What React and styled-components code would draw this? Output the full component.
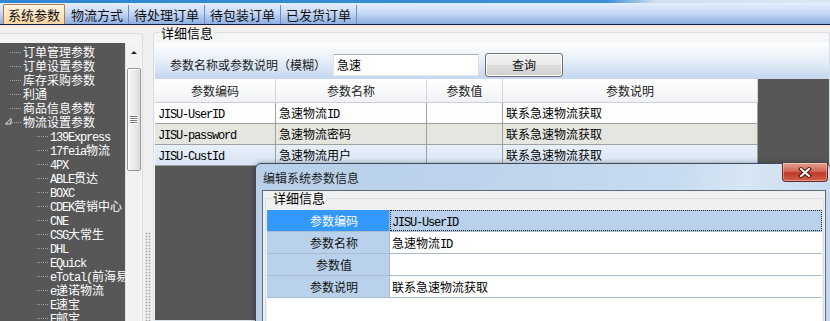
import React from 'react';
import styled, { createGlobalStyle, css } from 'styled-components';

const GlobalStyle = createGlobalStyle`
  html, body { margin: 0; padding: 0; }
  body {
    background: #f0f0f0;
    font-family: "Noto Sans CJK SC", "Liberation Sans", sans-serif;
    font-size: 12px;
    color: #000;
    overflow: hidden;
  }
`;

const Screen = styled.div`
  position: relative;
  width: 830px;
  height: 321px;
  overflow: hidden;
  display: flex;
  flex-direction: column;
  background: #f0f0f0;
`;

const TopStrip = styled.div`
  height: 3px;
  flex: none;
  background: linear-gradient(90deg, #2f86d2 0%, #3a8ed6 73%, #cfe0f1 79%, #dbe8f4 100%);
`;

const TabBar = styled.div`
  height: 21px;
  flex: none;
  display: flex;
  align-items: flex-end;
  padding-left: 3px;
  background: linear-gradient(180deg, #e4eefc 0%, #c9dbf6 45%, #8eaee2 100%);
  border-bottom: 1px solid #161c4a;
`;

const Tab = styled.div`
  height: 19px;
  padding: 0 5px;
  font-size: 13px;
  line-height: 19px;
  color: #111;
  white-space: nowrap;
  border-right: 1px solid #6f8fc0;
  ${({ $active }) => $active && css`
    padding: 0 4px;
    background: linear-gradient(180deg, #fff4e2 0%, #fde3c0 55%, #fbd6a2 100%);
    border: 1px solid #b47c4c;
    border-bottom: none;
    border-radius: 2px 2px 0 0;
    margin-right: 1px;
  `}
`;

const Body = styled.div`
  flex: 1;
  display: flex;
  min-height: 0;
  background: linear-gradient(180deg, #f7ece4 0, #f7ece4 3px, #fbfbfb 3px, #fbfbfb 4px, #f0f0f0 4px);
`;

/* ---------- left tree ---------- */

const LeftPanel = styled.div`
  width: 143px;
  flex: none;
  padding-top: 8px;
  display: flex;
  flex-direction: column;
`;

const LeftBox = styled.div`
  flex: 1;
  display: flex;
  box-sizing: border-box;
  padding: 9px 1px 0 0;
  border-top: 1px solid #d5dfe5;
  border-right: 1px solid #d5dfe5;
  border-top-right-radius: 4px;
  background: #f4f4f4;
  min-height: 0;
`;

const Tree = styled.div`
  width: 125px;
  flex: none;
  background: #575757;
  overflow: hidden;
  padding-top: 2px;
`;

const TreeRow = styled.div`
  position: relative;
  height: 14px;
  line-height: 14px;
  padding-left: ${({ $level }) => ($level === 1 ? 23 : 50)}px;
  color: #fff;
  font-size: 12px;
  white-space: nowrap;
  &::before {
    content: '';
    position: absolute;
    left: ${({ $level }) => ($level === 1 ? 10 : 37)}px;
    width: 11px;
    top: 7px;
    border-top: 1px dotted #a4a4a4;
  }
`;

const Expander = styled.span`
  position: absolute;
  left: 5px;
  top: 3px;
  width: 7px;
  height: 7px;
  display: flex;
`;

const Latin = styled.span`
  font-family: "Liberation Mono", monospace;
  font-size: 12px;
  letter-spacing: -1.2px;
`;

const mix = (s) =>
  s.split(/([\x20-\x7e]+)/).map((p, i) =>
    /[\x20-\x7e]/.test(p) ? <Latin key={i}>{p}</Latin> : p
  );

const Scroll = styled.div`
  width: 16px;
  flex: none;
  background: #f2f2f2;
  border-left: 1px solid #e4e4e4;
  box-sizing: border-box;
  display: flex;
  flex-direction: column;
  align-items: center;
`;

const ArrowUp = styled.div`
  margin-top: 8px;
  width: 0;
  height: 0;
  border-left: 3px solid transparent;
  border-right: 3px solid transparent;
  border-bottom: 3px solid #222;
`;

const Thumb = styled.div`
  margin-top: 14px;
  width: 14px;
  height: 103px;
  box-sizing: border-box;
  border: 1px solid #979797;
  border-radius: 2px;
  background: linear-gradient(90deg, #f6f6f6 0%, #ececec 50%, #dcdcdc 100%);
  box-shadow: inset 1px 1px 0 #fff;
  display: flex;
  flex-direction: column;
  align-items: center;
  justify-content: center;
  gap: 1px;
`;

const GripLine = styled.div`
  width: 7px;
  height: 1px;
  background: #7a7a7a;
  box-shadow: 0 1px 0 #fff;
`;

const Splitter = styled.div`
  width: 10px;
  flex: none;
  display: flex;
  justify-content: center;
  padding-top: 207px;
  box-sizing: border-box;
`;

const SplitGrip = styled.div`
  width: 6px;
  height: 100px;
  background-image: radial-gradient(#a2a2a2 40%, transparent 50%);
  background-size: 3px 3px;
`;

/* ---------- right panel ---------- */

const Group = styled.fieldset`
  flex: 1;
  min-width: 0;
  margin: 0;
  padding: 0 0 0 1px;
  border: 1px solid #d5dfe5;
  border-radius: 3px;
  display: flex;
  flex-direction: column;
  background: #f6f6f6;
`;

const Legend = styled.legend`
  margin-left: 5px;
  padding: 0 1px;
  font-size: 13px;
  line-height: ${({ $lh }) => $lh || 15}px;
  color: #000;
`;

const SearchBar = styled.div`
  margin-top: 3px;
  height: 36px;
  flex: none;
  box-sizing: border-box;
  padding: 7px 0 0 15px;
  display: flex;
  align-items: center;
  background: linear-gradient(180deg, #fdfeff 0%, #e9f0f9 45%, #c4d7ee 100%);
`;

const SearchLabel = styled.span`
  font-size: 12px;
  color: #222;
  white-space: nowrap;
`;

const SearchInput = styled.div`
  margin-left: 7px;
  width: 146px;
  height: 22px;
  box-sizing: border-box;
  padding-left: 3px;
  border: 1px solid #abadb3;
  border-color: #abadb3 #dbdfe6 #e3e9ef #e2e3ea;
  background: #fff;
  font-size: 12px;
  line-height: 20px;
`;

const Button = styled.div`
  margin-left: 6px;
  width: 78px;
  height: 24px;
  box-sizing: border-box;
  border: 1px solid #707070;
  border-radius: 3px;
  background: linear-gradient(180deg, #f2f2f2 0%, #ebebeb 48%, #dddddd 52%, #cfcfcf 100%);
  box-shadow: inset 0 0 0 1px #fcfcfc;
  text-align: center;
  font-size: 12px;
  line-height: 22px;
  color: #111;
`;

const GridArea = styled.div`
  flex: 1;
  background: #575757;
`;

const Grid = styled.div`
  display: grid;
  grid-template-columns: 121px 151px 76px 255px;
  width: 603px;
`;

const HeadCell = styled.div`
  height: 24px;
  box-sizing: border-box;
  border-right: 1px solid #d5d5d5;
  border-bottom: 1px solid #d0d0d0;
  background: linear-gradient(180deg, #ffffff 0%, #f7f8fa 60%, #eff1f4 100%);
  text-align: center;
  font-size: 12px;
  line-height: 23px;
  color: #222;
`;

const rowBg = {
  plain: '#fdfdfd',
  alt: '#e6e6e1',
  sel: 'linear-gradient(180deg, #e8f0fa 0%, #d8e4f3 100%)',
};

const Cell = styled.div`
  height: 21px;
  box-sizing: border-box;
  border-right: 1px solid #a0a0a0;
  border-bottom: 1px solid #a0a0a0;
  background: ${({ $tone }) => rowBg[$tone]};
  padding-left: 3px;
  font-size: 12px;
  line-height: 20px;
  white-space: nowrap;
  overflow: hidden;
`;

/* ---------- dialog ---------- */

const Dialog = styled.div`
  position: absolute;
  left: 255px;
  top: 163px;
  width: 576px;
  height: 170px;
  box-sizing: border-box;
  border: 1px solid #3d4a5c;
  border-radius: 6px 6px 0 0;
  background: linear-gradient(100deg, #b7cfe8 0%, #bed5ec 45%, #c7dcf0 70%, #d8e6f4 82%, #c2d7ee 100%);
  box-shadow: 0 0 5px rgba(0, 0, 0, 0.35);
  padding: 0 4px 0 6px;
  display: flex;
  flex-direction: column;
`;

const TitleBar = styled.div`
  height: 26px;
  flex: none;
  display: flex;
  align-items: center;
  padding-left: 1px;
  font-size: 12px;
  color: #1a1a1a;
`;

const CloseBtn = styled.div`
  position: absolute;
  right: 2px;
  top: -1px;
  width: 46px;
  height: 19px;
  box-sizing: border-box;
  border: 1px solid #6e2a22;
  border-top: none;
  border-radius: 0 0 4px 4px;
  background: linear-gradient(180deg, #e4a08f 0%, #d26a55 45%, #c0392a 55%, #d2614a 100%);
  box-shadow: inset 0 0 0 1px rgba(255, 255, 255, 0.35);
  display: flex;
  align-items: center;
  justify-content: center;
`;

const Client = styled.div`
  flex: 1;
  display: flex;
  flex-direction: column;
  background: #f0f0f0;
  border: 1px solid #5c6a7a;
  border-bottom: none;
`;

const DlgGroup = styled.fieldset`
  flex: 1;
  min-width: 0;
  margin: 0 1px 0 2px;
  padding: 5px 1px 0 1px;
  border: 1px solid #d5dfe5;
  border-radius: 3px;
  display: flex;
  flex-direction: column;
`;

const PropGrid = styled.div`
  flex: 1;
  background: #fff;
  display: flex;
  flex-direction: column;
`;

const PropRow = styled.div`
  display: flex;
  height: 22px;
  border-bottom: 1px solid #aabdcf;
  box-sizing: border-box;
`;

const PropLabel = styled.div`
  width: 123px;
  flex: none;
  border-right: 1px solid #aabdcf;
  padding-left: 12px;
  box-sizing: border-box;
  text-align: center;
  font-size: 12px;
  line-height: 21px;
  background: ${({ $sel }) => ($sel ? '#3399ff' : '#b9d1ea')};
  color: ${({ $sel }) => ($sel ? '#fff' : '#111')};
`;

const PropValue = styled.div`
  flex: 1;
  padding-left: 2px;
  font-size: 12px;
  line-height: 21px;
  white-space: nowrap;
  ${({ $sel }) => $sel && css`
    background: #b9d1ea;
    outline: 1px dotted #222;
    outline-offset: -1px;
  `}
`;

/* ---------- data ---------- */

const TABS = ['系统参数', '物流方式', '待处理订单', '待包装订单', '已发货订单'];

const LEVEL1 = ['订单管理参数', '订单设置参数', '库存采购参数', '利通', '商品信息参数', '物流设置参数'];
const LEVEL2 = [
  '139Express', '17feia物流', '4PX', 'ABLE贯达', 'BOXC', 'CDEK营销中心', 'CNE',
  'CSG大常生', 'DHL', 'EQuick', 'eTotal(前海易', 'e递诺物流', 'E速宝', 'E邮宝',
];

const COLUMNS = ['参数编码', '参数名称', '参数值', '参数说明'];
const ROWS = [
  { code: 'JISU-UserID', name: '急速物流ID', tone: 'plain' },
  { code: 'JISU-password', name: '急速物流密码', tone: 'alt' },
  { code: 'JISU-CustId', name: '急速物流用户', tone: 'sel' },
];

const PROPS = [
  { label: '参数编码', value: 'JISU-UserID', sel: true },
  { label: '参数名称', value: '急速物流ID' },
  { label: '参数值', value: '' },
  { label: '参数说明', value: '联系急速物流获取' },
];

export default function App() {
  return (
    <Screen>
      <GlobalStyle />
      <TopStrip />
      <TabBar>
        {TABS.map((t, i) => (
          <Tab key={t} $active={i === 0}>{t}</Tab>
        ))}
      </TabBar>
      <Body>
        <LeftPanel>
          <LeftBox>
            <Tree>
              {LEVEL1.map((t, i) => (
                <TreeRow key={t} $level={1}>
                  {i === LEVEL1.length - 1 && (
                    <Expander>
                      <svg width="7" height="7" viewBox="0 0 7 7">
                        <path d="M6 0.5 V6 H0.5 Z" fill="none" stroke="#e8e8e8" strokeWidth="1" />
                      </svg>
                    </Expander>
                  )}
                  {mix(t)}
                </TreeRow>
              ))}
              {LEVEL2.map((t) => (
                <TreeRow key={t} $level={2}>{mix(t)}</TreeRow>
              ))}
            </Tree>
            <Scroll>
              <ArrowUp />
              <Thumb>
                <GripLine />
                <GripLine />
                <GripLine />
                <GripLine />
              </Thumb>
            </Scroll>
          </LeftBox>
        </LeftPanel>
        <Splitter>
          <SplitGrip />
        </Splitter>
        <Group>
          <Legend>详细信息</Legend>
          <SearchBar>
            <SearchLabel>参数名称或参数说明（模糊）</SearchLabel>
            <SearchInput>急速</SearchInput>
            <Button>查询</Button>
          </SearchBar>
          <GridArea>
            <Grid>
              {COLUMNS.map((c) => (
                <HeadCell key={c}>{c}</HeadCell>
              ))}
              {ROWS.map((r) => (
                <React.Fragment key={r.code}>
                  <Cell $tone={r.tone}>{mix(r.code)}</Cell>
                  <Cell $tone={r.tone}>{mix(r.name)}</Cell>
                  <Cell $tone={r.tone} />
                  <Cell $tone={r.tone}>联系急速物流获取</Cell>
                </React.Fragment>
              ))}
            </Grid>
          </GridArea>
        </Group>
      </Body>

      <Dialog>
        <TitleBar>编辑系统参数信息</TitleBar>
        <CloseBtn>
          <svg width="14" height="11" viewBox="0 0 14 11">
            <path d="M3 2 L11 9 M11 2 L3 9" stroke="#4a1810" strokeWidth="4" strokeLinecap="square" />
            <path d="M3 2 L11 9 M11 2 L3 9" stroke="#fff" strokeWidth="2" strokeLinecap="square" />
          </svg>
        </CloseBtn>
        <Client>
          <DlgGroup>
            <Legend $lh={14}>详细信息</Legend>
            <PropGrid>
              {PROPS.map((p) => (
                <PropRow key={p.label}>
                  <PropLabel $sel={p.sel}>{p.label}</PropLabel>
                  <PropValue $sel={p.sel}>{mix(p.value)}</PropValue>
                </PropRow>
              ))}
            </PropGrid>
          </DlgGroup>
        </Client>
      </Dialog>
    </Screen>
  );
}
